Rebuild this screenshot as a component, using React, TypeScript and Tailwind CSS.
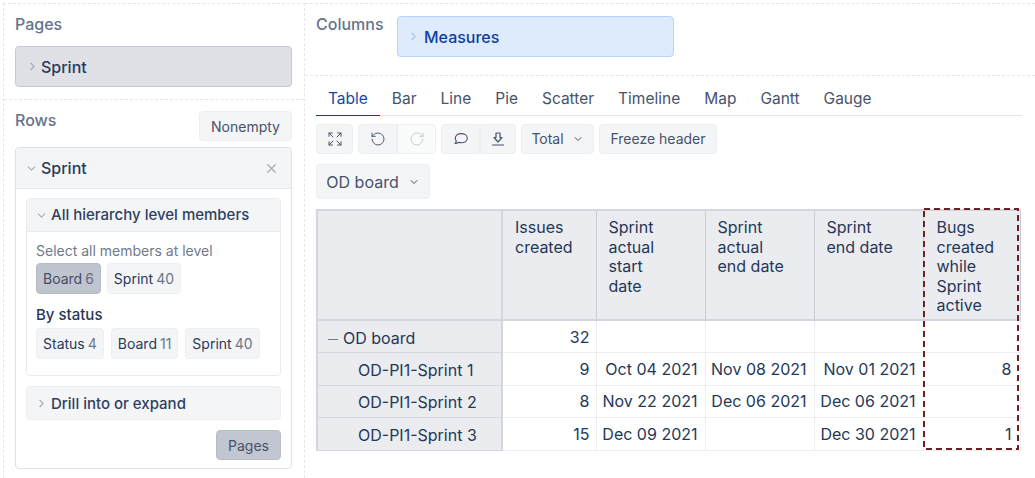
import { ChevronRight, ChevronDown, X, RotateCcw, RotateCw, Expand } from 'lucide-react'

const tabs = ['Table', 'Bar', 'Line', 'Pie', 'Scatter', 'Timeline', 'Map', 'Gantt', 'Gauge']

const headers = ['Issues\ncreated', 'Sprint\nactual\nstart\ndate', 'Sprint\nactual\nend date', 'Sprint\nend date', 'Bugs\ncreated\nwhile\nSprint\nactive']

const rows = [
  { label: 'OD board', issues: '32', start: '', actualEnd: '', end: '', bugs: '', top: true },
  { label: 'OD-PI1-Sprint 1', issues: '9', start: 'Oct 04 2021', actualEnd: 'Nov 08 2021', end: 'Nov 01 2021', bugs: '8' },
  { label: 'OD-PI1-Sprint 2', issues: '8', start: 'Nov 22 2021', actualEnd: 'Dec 06 2021', end: 'Dec 06 2021', bugs: '' },
  { label: 'OD-PI1-Sprint 3', issues: '15', start: 'Dec 09 2021', actualEnd: '', end: 'Dec 30 2021', bugs: '1' },
]

function Chip({ name, count, active }: { name: string; count: string; active?: boolean }) {
  return (
    <div className={`h-[31px] px-[6px] flex items-center gap-[3px] rounded-[4px] border text-[14px] ${active ? 'bg-[#bfc4cf] border-[#b5bac6] text-[#3f4d68]' : 'bg-[#f4f5f7] border-[#eceef1] text-[#2a3a5b]'}`}>
      {name}
      <span className={active ? 'text-[#5f6b80]' : 'text-[#6b7688]'}>{count}</span>
    </div>
  )
}

function ToolBtn({ children, className = '' }: { children: React.ReactNode; className?: string }) {
  return (
    <div className={`h-[30px] flex items-center justify-center border border-[#eceef1] text-[#46536c] ${className}`}>
      {children}
    </div>
  )
}

export default function App() {
  return (
    <div className="w-[1035px] h-[478px] overflow-hidden bg-white flex pt-[3px] pl-[3px] text-[#253858] font-['Inter',sans-serif]">
      {/* left panel */}
      <aside className="w-[302px] h-[500px] shrink-0 border-x border-t border-dashed border-[#e4e6ea]">
        <div className="h-[96px] pl-[11px] pr-[12px] border-b border-dashed border-[#e4e6ea]">
          <div className="pt-[10px] text-[16px] leading-[20px] font-medium text-[#65738b]">Pages</div>
          <div className="mt-[12px] h-[41px] flex items-center bg-[#dfe1e6] border border-[#c4c9d4] rounded-[4px] pl-[10px] gap-[2px]">
            <ChevronRight size={13} className="text-[#a5adba]" />
            <span className="text-[16px] font-medium text-[#2a3a5b]">Sprint</span>
          </div>
        </div>
        <div className="pl-[11px] pr-[12px] pt-[11px]">
          <div className="flex justify-between h-[36px]">
            <div className="text-[16px] leading-[18px] font-medium text-[#65738b]">Rows</div>
            <div className="w-[93px] h-[30px] flex items-center justify-center bg-[#f4f5f7] border border-[#eceef1] rounded-[4px] text-[14px] text-[#46536c]">Nonempty</div>
          </div>
          <div className="h-[322px] border border-[#dfe1e6] rounded-[4px] flex flex-col">
            <div className="h-[41px] flex items-center bg-[#f4f5f7] pl-[9px] pr-[12px] rounded-t-[4px] border-b border-[#e6e8ec]">
              <ChevronDown size={13} className="text-[#a5adba]" />
              <span className="ml-[3px] text-[16px] font-medium text-[#2a3a5b]">Sprint</span>
              <X size={15} className="ml-auto text-[#a5adba]" />
            </div>
            <div className="px-[10px] pt-[9px] flex flex-col">
              <div className="h-[178px] border border-[#e9ebee] rounded-[4px]">
                <div className="h-[33px] flex items-center bg-[#f4f5f7] pl-[8px] border-b border-[#e9ebee]">
                  <ChevronDown size={13} className="text-[#a5adba]" />
                  <span className="ml-[3px] pt-[1px] text-[15px] font-medium text-[#2f3f5f]">All hierarchy level members</span>
                </div>
                <div className="px-[9px]">
                  <div className="pt-[10px] text-[14px] leading-[18px] text-[#6f7a8d]">Select all members at level</div>
                  <div className="mt-[3px] flex gap-[6px]">
                    <Chip name="Board" count="6" active />
                    <Chip name="Sprint" count="40" />
                  </div>
                  <div className="mt-[12px] text-[15px] leading-[18px] font-medium text-[#253858]">By status</div>
                  <div className="mt-[4px] flex gap-[7px]">
                    <Chip name="Status" count="4" />
                    <Chip name="Board" count="11" />
                    <Chip name="Sprint" count="40" />
                  </div>
                </div>
              </div>
              <div className="mt-[10px] h-[34px] flex items-center bg-[#f4f5f7] border border-[#eceef1] rounded-[4px] pl-[8px]">
                <ChevronRight size={13} className="text-[#a5adba]" />
                <span className="ml-[3px] pt-[2px] text-[15px] font-medium text-[#2f3f5f]">Drill into or expand</span>
              </div>
              <div className="mt-[10px] flex justify-end">
                <div className="w-[65px] h-[30px] flex items-center justify-center bg-[#c1c6d1] border border-[#b9bec9] rounded-[4px] text-[14px] text-[#46536c]">Pages</div>
              </div>
            </div>
          </div>
        </div>
      </aside>

      {/* right panel */}
      <main className="flex-1 min-w-0 border-t border-dashed border-[#e4e6ea]">
        <div className="h-[72px] flex items-start px-[11px] border-b border-dashed border-[#e4e6ea]">
          <div className="pt-[10px] w-[81px] text-[16px] leading-[20px] font-medium text-[#65738b]">Columns</div>
          <div className="mt-[12px] w-[277px] h-[41px] flex items-center bg-[#deebfd] border border-[#b8d3fb] rounded-[4px] pl-[9px] gap-[4px]">
            <ChevronRight size={13} className="text-[#a9c4ef]" />
            <span className="text-[16px] font-medium text-[#0f3f9a]">Measures</span>
          </div>
        </div>

        <div className="pl-[11px] pr-[13px]">
          <div className="h-[40px] flex items-end border-b border-[#e4e6ea] text-[15.5px] text-[#46536c]">
            {tabs.map((t, i) => (
              <div key={t} className={`h-[31px] px-[12px] pb-[3px] flex items-center -mb-px ${i === 0 ? 'border-b border-[#0f3f9a] text-[#0f4aa8]' : ''}`}>{t}</div>
            ))}
          </div>

          <div className="mt-[8px] flex gap-[5px]">
            <ToolBtn className="w-[37px] rounded-[4px] bg-[#f4f5f7]">
              <Expand size={16} strokeWidth={1.5} />
            </ToolBtn>
            <div className="flex">
              <ToolBtn className="w-[39px] rounded-l-[4px] bg-[#f4f5f7]"><RotateCcw size={16} strokeWidth={1.4} /></ToolBtn>
              <ToolBtn className="w-[39px] rounded-r-[4px] bg-[#fafbfb] text-[#c1c7d0]"><RotateCw size={16} strokeWidth={1.4} /></ToolBtn>
            </div>
            <div className="flex">
              <ToolBtn className="w-[39px] rounded-l-[4px] bg-[#f4f5f7]">
                <svg width="16" height="16" viewBox="0 0 16 16" fill="none" stroke="currentColor" strokeWidth="1.1">
                  <path d="M8.3 2.6c3.4 0 6 1.900 6 4.600s-2.600 4.600-6 4.600c-1 0-1.900-.2-2.700-.5-.8.7-2 1.200-3.500 1.200.7-.7 1.100-1.500 1.200-2.400C2.800 9.200 2.300 8.300 2.300 7.200c0-2.700 2.600-4.600 6-4.600z" strokeLinejoin="round" />
                </svg>
              </ToolBtn>
              <ToolBtn className="w-[36px] rounded-r-[4px] bg-[#f4f5f7]">
                <svg width="16" height="16" viewBox="0 0 16 16" fill="none" stroke="currentColor" strokeWidth="1.2">
                  <path d="M6 2h4v4.500h2L8 11 4 6.500h2z" strokeLinejoin="round" />
                  <path d="M2.500 14h11" strokeLinecap="round" />
                </svg>
              </ToolBtn>
            </div>
            <ToolBtn className="w-[73px] pb-[1px] rounded-[4px] gap-[8px] text-[14px] bg-[#f4f5f7]">Total<ChevronDown size={12} /></ToolBtn>
            <ToolBtn className="w-[118px] pb-[1px] rounded-[4px] text-[14px] bg-[#f4f5f7]">Freeze header</ToolBtn>
          </div>

          <div className="mt-[10px] w-[114px] h-[35px] flex items-center justify-center gap-[9px] bg-[#f4f5f7] border border-[#eceef1] rounded-[4px] text-[16px] text-[#46536c]">
            OD board<ChevronDown size={12} />
          </div>

          <div className="relative mt-[10px] w-[703px]">
            <table className="table-fixed w-[703px] border-collapse text-[16px] leading-[19.6px] text-[#253858]">
              <colgroup>
                <col className="w-[185px]" />
                <col className="w-[94px]" />
                <col className="w-[109px]" />
                <col className="w-[109px]" />
                <col className="w-[109px]" />
                <col className="w-[97px]" />
              </colgroup>
              <thead>
                <tr className="h-[110px] bg-[#ebecf0]">
                  <th className="border-2 border-[#d3d6de]" />
                  {headers.map((h, i) => (
                    <th key={h} className={`border border-[#c9ccd6] border-y-2 border-y-[#d3d6de] align-top text-left font-normal whitespace-pre-line pt-[7px] ${i === 4 ? 'pl-[13px]' : 'pl-[12px]'}`}>{h}</th>
                  ))}
                </tr>
              </thead>
              <tbody>
                {rows.map((r) => (
                  <tr key={r.label} className="h-[32.500px]">
                    <td className={`bg-[#ebecf0] border border-[#d3d6de] border-x-2 pt-[4px] whitespace-nowrap ${r.top ? 'pl-[10px]' : 'pl-[40px]'}`}>
                      {r.top && <span className="inline-block w-[10px] h-px bg-[#6b7688] align-middle mr-[5px]" />}
                      {r.label}
                    </td>
                    {[r.issues, r.start, r.actualEnd, r.end, r.bugs].map((v, i) => (
                      <td key={i} className={`border border-[#eceef1] text-right pt-[2px] whitespace-nowrap ${i === 4 ? 'pr-[8px]' : i === 0 ? 'pr-[6px]' : 'pr-[7px]'}`}>{v}</td>
                    ))}
                  </tr>
                ))}
              </tbody>
            </table>
            <svg className="absolute left-[607px] -top-[1px]" width="96" height="242" fill="none">
              <rect x="1" y="1" width="94" height="240" stroke="#6d2020" strokeWidth="2" strokeDasharray="6 4" />
            </svg>
          </div>
        </div>
      </main>
    </div>
  )
}
